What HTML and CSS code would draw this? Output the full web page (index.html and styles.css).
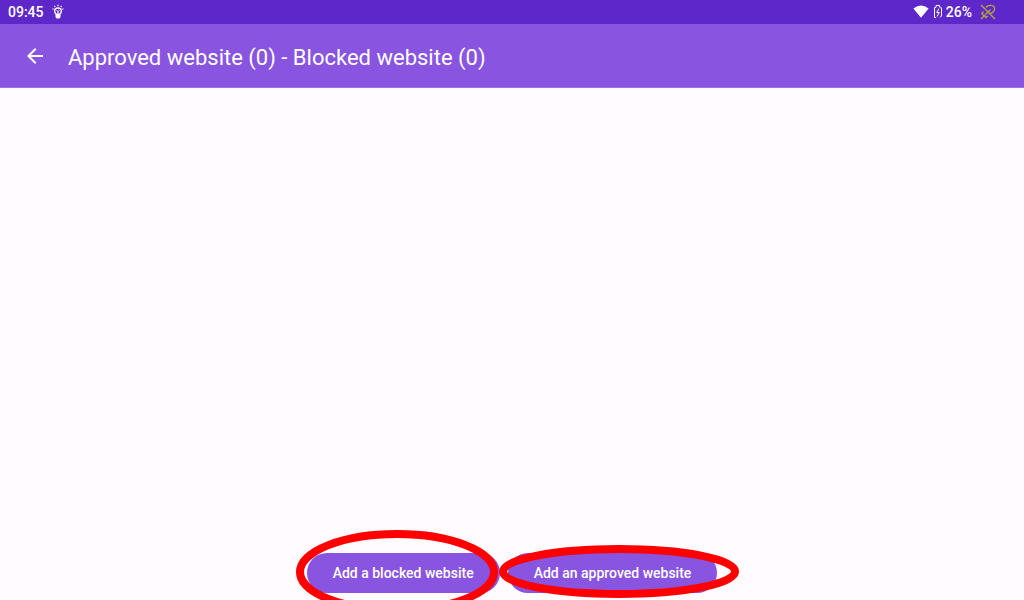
FILE: index.html
```
<!DOCTYPE html>
<html lang="en">
<head>
  <meta charset="UTF-8" />
  <meta name="viewport" content="width=device-width, initial-scale=1" />
  <title>Approved website (0) - Blocked website (0)</title>
  <link rel="stylesheet" href="styles.css">
</head>
<body>

  <div class="status-bar">
    <div class="status-left">
      <span>09:45</span>
      <svg class="icon-bulb" width="12" height="16" viewBox="0 0 12 16" fill="none" stroke="#fff">
        <path d="M6 .8v1.400M2.300 1.800l.9 1.200M9.700 1.800l-.9 1.200M.5 4.800l1.300.4M11.500 4.800l-1.300.4" stroke-width="1.200" />
        <path d="M4.400 10.200C1.800 8.600 1.800 4 6 4s4.200 4.600 1.600 6.200z" stroke-width="1.300" />
        <path d="M4.500 6.500l1.500 1 1.500-1M6 7.500v2.500" />
        <path d="M3.500 10h5v3l-1 1.500h-3l-1-1.500z" fill="#fff" stroke="none" />
      </svg>
    </div>
    <div class="status-right">
      <svg width="16" height="16" viewBox="0 0 16 16" fill="#fff">
        <path d="M8 13.800L.4 4.400Q8-1.200 15.600 4.400z" />
      </svg>
      <svg class="icon-battery" width="10" height="16" viewBox="0 0 10 16" fill="none" stroke="#fff">
        <path d="M3 13.500H1.500v-10H3V1.500h3.500v2" />
        <path d="M7 2.500l1.500 1.500V12L7 13.500" />
        <path d="M6 4.500L3.700 8.500h2.600L4 12.500" />
      </svg>
      <span>26%</span>
      <svg class="icon-off" width="16" height="16" viewBox="0 0 16 16" fill="none" stroke="#b0a43c" stroke-width="1.400">
        <path d="M1 1l14 14M1 15l4.500-4.500" />
        <path d="M6 3.500C8 .5 14 .8 14.500 4c.4 3-2 5-4.500 5.500M3.500 7.500L1.800 9.500 6 13.500 8 12" />
        <path d="M5.500 10.500l5-5" />
      </svg>
    </div>
  </div>

  <header class="app-bar">
    <button class="back" type="button" aria-label="Back">
      <svg width="24" height="24" viewBox="0 0 24 24" fill="#fff">
        <path d="M20 11H7.830l5.590-5.590L12 4l-8 8 8 8 1.410-1.410L7.830 13H20z" />
      </svg>
    </button>
    <h1>Approved website (0) - Blocked website (0)</h1>
  </header>

  <main class="content">
    <div class="actions">
      <div class="action">
        <button class="btn" type="button">Add a blocked website</button>
        <svg class="mark mark-blocked" width="204" height="86" viewBox="0 0 204 86">
          <ellipse cx="102" cy="43" rx="97" ry="38" />
        </svg>
      </div>
      <div class="action">
        <button class="btn" type="button">Add an approved website</button>
        <svg class="mark mark-approved" width="242" height="54" viewBox="0 0 242 54">
          <ellipse cx="121" cy="26.500" rx="116" ry="22.500" />
        </svg>
      </div>
    </div>
  </main>

</body>
</html>
```
FILE: styles.css
```
:root {
  --bg: #fffbff;
  --primary: #8854e0;
  --primary-light: #a06cf0;
  --primary-dark: #5e27ca;
  --mark: #ff0000;
}

* {
  box-sizing: border-box;
}

body {
  display: flex;
  flex-direction: column;
  min-height: 100vh;
  margin: 0;
  font-family: Roboto, sans-serif;
  background: var(--bg);
  color: #fff;
}

svg {
  display: block;
}

.status-bar {
  display: flex;
  justify-content: space-between;
  align-items: center;
  height: 24px;
  padding: 0 28px 0 8px;
  background: var(--primary-dark);
  font-size: 14px;
  font-weight: 500;
}

.status-left,
.status-right {
  display: flex;
  align-items: center;
}

.icon-bulb {
  margin-left: 8px;
}

.icon-battery {
  margin: 0 3px 0 4px;
}

.icon-off {
  margin-left: 8px;
}

.app-bar {
  display: flex;
  align-items: center;
  height: 64px;
  padding: 0 23px;
  border-bottom: 1px solid var(--primary-light);
  background: var(--primary);
}

.back {
  margin-right: 21px;
  padding: 0;
  border: none;
  background: none;
  cursor: pointer;
}

h1 {
  margin: 0;
  padding-top: 4px;
  font-size: 22px;
  font-weight: 400;
  line-height: 28px;
}

.content {
  display: flex;
  flex: 1;
  flex-direction: column;
  justify-content: flex-end;
  padding-bottom: 7px;
  overflow: hidden;
}

.actions {
  display: flex;
  justify-content: center;
  gap: 8px;
}

.action {
  position: relative;
}

.btn {
  height: 40px;
  padding: 0 26px;
  border: none;
  border-radius: 20px;
  background: var(--primary);
  color: #fff;
  font-family: inherit;
  font-size: 14px;
  font-weight: 500;
  cursor: pointer;
}

/* rings around the two actions */
.mark {
  position: absolute;
  fill: none;
  stroke: var(--mark);
  stroke-width: 8px;
  pointer-events: none;
}

.mark-blocked {
  top: -24px;
  left: -12px;
}

.mark-approved {
  top: -8px;
  left: -10px;
}
```
